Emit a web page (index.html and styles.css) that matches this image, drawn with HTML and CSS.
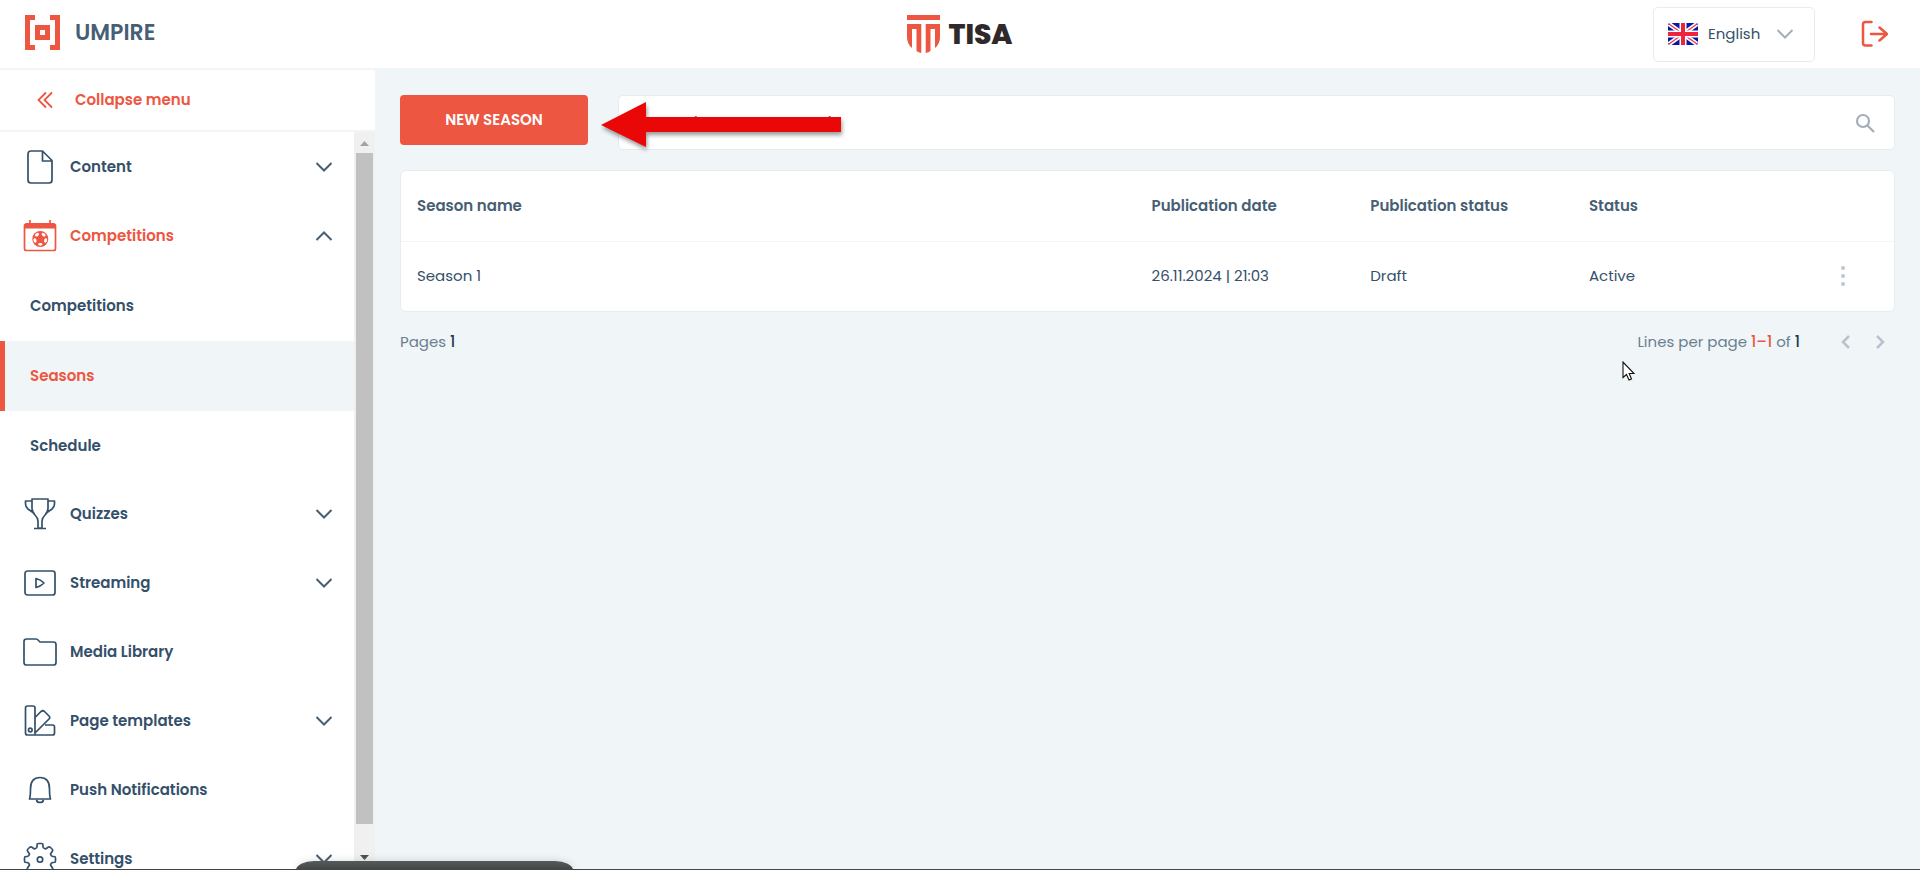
FILE: index.html
```html
<!DOCTYPE html>
<html lang="en">
<head>
  <meta charset="UTF-8">
  <title>Umpire - Seasons</title>
  <link rel="stylesheet" href="styles.css">
</head>
<body>
  <!-- Shared icons -->
  <svg class="sprite" aria-hidden="true">
    <symbol id="chevron" viewBox="0 0 18 12">
      <path d="M1.500 2 9 9.500 16.500 2" fill="none" stroke="currentColor" stroke-width="2"/>
    </symbol>
  </svg>

  <!-- Header -->
  <header class="header">
    <a class="brand" href="#">
      <svg class="brand-icon" viewBox="0 0 35 35" fill="currentColor">
        <path d="M0 0H10V5H5V30H10V35H0ZM35 0H25V5H30V30H25V35H35ZM10 10H25V25H10ZM15 15V20H20V15Z" fill-rule="evenodd"/>
      </svg>
      <span>UMPIRE</span>
    </a>
    <a class="client" href="#">
      <svg class="client-icon" viewBox="0 0 33 38" fill="currentColor">
        <path d="M0 0H33V5H0ZM0 9H14.300V38Q11.500 37.500 9.500 36V14H5V33Q0 29 0 22ZM33 9H18.700V38Q21.500 37.500 23.500 36V14H28V33Q33 29 33 22Z"/>
      </svg>
      <span>TISA</span>
    </a>
    <div class="header-right">
      <label class="language">
        <svg class="flag" viewBox="0 0 30 22">
          <rect width="30" height="22" rx="2" fill="#0b17a4"/>
          <path d="M1 1 29 21M29 1 1 21" stroke="#fff" stroke-width="4.500"/>
          <path d="M1 1 29 21M29 1 1 21" stroke="#ef3348" stroke-width="1.200"/>
          <path d="M15 0V22M0 11H30" stroke="#fff" stroke-width="7"/>
          <path d="M15 0V22M0 11H30" stroke="#ef233c" stroke-width="4"/>
        </svg>
        <select aria-label="Language">
          <option>English</option>
        </select>
        <svg class="chevron"><use href="#chevron"/></svg>
      </label>
      <button class="logout" aria-label="Log out">
        <svg viewBox="0 0 28 28" fill="none" stroke="currentColor" stroke-width="2.500" stroke-linecap="round" stroke-linejoin="round">
          <path d="M11.500 2H5.500Q3 2 3 4.500V23Q3 25.500 5.500 25.500H11.500M11 14H27M19.500 7.500 27 14 19.500 20.500"/>
        </svg>
      </button>
    </div>
  </header>

  <div class="layout">
    <!-- Sidebar -->
    <aside class="sidebar">
      <button class="collapse">
        <svg viewBox="0 0 16 18" fill="none" stroke="currentColor" stroke-width="1.800">
          <path d="M9 1.500 1.500 9 9 16.500M15 1.500 7.500 9 15 16.500"/>
        </svg>
        <span>Collapse menu</span>
      </button>
      <div class="sidebar-body">
        <nav class="menu">
          <a class="menu-item" href="#">
            <svg class="menu-icon" viewBox="0 0 34 34"><path d="M19.500 1H8Q5 1 5 4V30Q5 33 8 33H26Q29 33 29 30V10.500ZM19.500 1V11H29"/></svg>
            <span>Content</span>
            <svg class="chevron"><use href="#chevron"/></svg>
          </a>
          <a class="menu-item active" href="#">
            <svg class="menu-icon" viewBox="0 0 34 34">
              <rect x="1.500" y="5" width="31" height="26.500" rx="2"/>
              <path d="M1 8Q1 4 4 4H30Q33 4 33 8V9.500H1Z" fill="currentColor" stroke="none"/>
              <path d="M7 1V5M27 1V5"/>
              <!-- Football -->
              <circle cx="17.300" cy="20" r="8" fill="currentColor" stroke="none"/>
              <g fill="#fff" stroke="none">
                <ellipse cx="14" cy="15.700" rx="2.200" ry="1.500" transform="rotate(-35 14 15.700)"/>
                <ellipse cx="20.600" cy="15.700" rx="2.200" ry="1.500" transform="rotate(35 20.600 15.700)"/>
                <ellipse cx="12" cy="21.500" rx="1.500" ry="2.200" transform="rotate(-15 12 21.500)"/>
                <ellipse cx="22.600" cy="21.500" rx="1.500" ry="2.200" transform="rotate(15 22.600 21.500)"/>
                <ellipse cx="17.300" cy="25.300" rx="2.200" ry="1.400"/>
              </g>
            </svg>
            <span>Competitions</span>
            <svg class="chevron up"><use href="#chevron"/></svg>
          </a>
          <div class="submenu">
            <a class="submenu-item" href="#">Competitions</a>
            <a class="submenu-item current" href="#">Seasons</a>
            <a class="submenu-item" href="#">Schedule</a>
          </div>
          <a class="menu-item" href="#">
            <svg class="menu-icon" viewBox="0 0 34 34"><path d="M9 2H25V11Q25 15 22 18 19 21 19 24V31H15V24Q15 21 12 18 9 15 9 11ZM9 4H2.500V7Q2.500 10 5 12L10 15.500M25 4H31.500V7Q31.500 10 29 12L24 15.500M11 31.500H23"/></svg>
            <span>Quizzes</span>
            <svg class="chevron"><use href="#chevron"/></svg>
          </a>
          <a class="menu-item" href="#">
            <svg class="menu-icon" viewBox="0 0 34 34"><rect x="2" y="5" width="30" height="24" rx="2.500"/><path d="M13 12.500V21.500Q17.500 20.500 21 17 17.500 13.500 13 12.500Z"/></svg>
            <span>Streaming</span>
            <svg class="chevron"><use href="#chevron"/></svg>
          </a>
          <a class="menu-item" href="#">
            <svg class="menu-icon" viewBox="0 0 34 34"><path d="M3.500 4H13Q14.500 4 15.500 5.500L17 7H30.500Q33 7 33 9.500V27.500Q33 30 30.500 30H3.500Q1 30 1 27.500V6.500Q1 4 3.500 4Z"/></svg>
            <span>Media Library</span>
          </a>
          <a class="menu-item" href="#">
            <svg class="menu-icon" viewBox="0 0 34 34"><path d="M4.500 2H10Q12 2 12 4V31H4.500Q2.500 31 2.500 29V4Q2.500 2 4.500 2ZM12 13.500 18 7.500Q20 6 21.500 7.500L26 12Q27.500 13.500 26 15L12 29M22 21H29.500Q31.500 21 31.500 23V29Q31.500 31 29.500 31H11"/><circle cx="7.300" cy="26" r="1.800"/></svg>
            <span>Page templates</span>
            <svg class="chevron"><use href="#chevron"/></svg>
          </a>
          <a class="menu-item" href="#">
            <svg class="menu-icon" viewBox="0 0 34 34"><path d="M6.500 26H27.500Q26.500 23 26.500 16 26.500 4.500 17 4.500T7.500 16Q7.500 23 6.500 26ZM13.500 27Q14 29.500 17 29.500T20.500 27"/></svg>
            <span>Push Notifications</span>
          </a>
          <a class="menu-item" href="#">
            <svg class="menu-icon" viewBox="0 0 34 34">
              <path d="M14 5V3Q14 1.500 15.500 1.500H18.500Q20 1.500 20 3V5Q20.500 6.500 22.500 7L25.500 5Q26.500 4.500 27.500 5.500L29 7Q30 8 29.500 9L27.500 12Q28 14 29.500 14.500H31Q32.500 14.500 32.500 16V19Q32.500 20.500 31 20.500H29.500Q28 21 27.500 23L29.500 26Q30 27 29 28L27.500 29.500Q26.500 30.500 25.500 30L22.500 28Q20.500 28.500 20 30V32Q20 33.500 18.500 33.500H15.500Q14 33.500 14 32V30Q13.500 28.500 11.500 28L8.500 30Q7.500 30.500 6.500 29.500L5 28Q4 27 4.500 26L6.500 23Q6 21 4.500 20.500H3Q1.500 20.500 1.500 19V16Q1.500 14.500 3 14.500H4.500Q6 14 6.500 12L4.500 9Q4 8 5 7L6.500 5.500Q7.500 4.500 8.500 5L11.500 7Q13.500 6.500 14 5Z"/>
              <circle cx="17" cy="17.500" r="2.700"/>
            </svg>
            <span>Settings</span>
            <svg class="chevron"><use href="#chevron"/></svg>
          </a>
        </nav>
        <div class="scrollbar" aria-hidden="true">
          <div class="scroll-arrow"></div>
          <div class="scroll-thumb"></div>
          <div class="scroll-arrow down"></div>
        </div>
      </div>
    </aside>

    <!-- Main Content -->
    <main class="content">
      <div class="toolbar">
        <button class="new-season">NEW SEASON</button>
        <div class="search">
          <input type="text" aria-label="Search" placeholder="Search (min. 3 characters)">
          <button class="search-button" aria-label="Search">
            <svg viewBox="0 0 20 20" fill="none" stroke="currentColor" stroke-width="2.200"><circle cx="8" cy="8" r="6"/><path d="M12.500 12.500 19 19"/></svg>
          </button>
          <!-- Arrow pointing at the new season button -->
          <svg class="pointer-arrow" viewBox="0 0 241 46"><path d="M0 23 45 0V15H240V30H45V45Z" fill="#ea0707"/></svg>
        </div>
      </div>

      <div class="card">
        <table class="seasons">
          <thead>
            <tr>
              <th class="col-name">Season name</th>
              <th class="col-info">Publication date</th>
              <th class="col-info">Publication status</th>
              <th class="col-info">Status</th>
              <th></th>
            </tr>
          </thead>
          <tbody>
            <tr>
              <td>Season 1</td>
              <td>26.11.2024 | 21:03</td>
              <td>Draft</td>
              <td>Active</td>
              <td class="actions">
                <button class="more" aria-label="More actions">
                  <svg viewBox="0 0 4 20" fill="currentColor"><circle cx="2" cy="2" r="2"/><circle cx="2" cy="10" r="2"/><circle cx="2" cy="18" r="2"/></svg>
                </button>
              </td>
            </tr>
          </tbody>
        </table>
      </div>

      <div class="pagination">
        <p>Pages <b>1</b></p>
        <div class="pager">
          <p>Lines per page <b class="range">1–1</b> of <b>1</b></p>
          <button class="page-button" aria-label="Previous page"><svg viewBox="0 0 10 14"><path d="M8 1 2 7 8 13"/></svg></button>
          <button class="page-button" aria-label="Next page"><svg viewBox="0 0 10 14"><path d="M2 1 8 7 2 13"/></svg></button>
        </div>
      </div>
    </main>
  </div>

  <svg class="cursor" viewBox="0 0 13 20"><path d="M1 1V16.500L4.500 13.500 7 19 9.500 18 7.200 12.500H12Z" fill="#fff" stroke="#111" stroke-width="1.100"/></svg>
  <div class="dock"></div>
</body>
</html>
```
FILE: styles.css
```css
:root {
  --primary: #ed5640;
  --dark: #34506a;
  --text: #475f75;
  --muted: #6b7f90;
  --gray: #a3afbb;
  --light: #f0f5f8;
  --border: #e6ecf0;
}

* {
  margin: 0;
  padding: 0;
  box-sizing: border-box;
}

body {
  font-family: Poppins, Inter, sans-serif;
  font-size: 15px;
  line-height: 24px;
  color: var(--dark);
  background-color: var(--light);
  height: 100vh;
  display: flex;
  flex-direction: column;
  overflow: hidden;
  border-bottom: 1px solid #414546;
}

a {
  color: inherit;
  text-decoration: none;
}

button,
input,
select {
  font: inherit;
  color: inherit;
  border: none;
  background: none;
}

button {
  cursor: pointer;
}

svg {
  display: block;
  flex-shrink: 0;
}

.sprite {
  display: none;
}

.chevron {
  width: 18px;
  height: 12px;
}

.up {
  transform: rotate(180deg);
}

/* Header */
.header {
  display: grid;
  grid-template-columns: 1fr auto 1fr;
  align-items: center;
  height: 70px;
  flex-shrink: 0;
  padding: 0 25px;
  background-color: white;
  border-bottom: 2px solid var(--light);
}

.brand {
  display: flex;
  align-items: center;
  gap: 15px;
  padding-bottom: 3px;
  font-size: 22px;
  font-weight: 600;
  color: var(--text);
}

.brand-icon {
  width: 35px;
  height: 35px;
  color: var(--primary);
}

.client {
  display: flex;
  align-items: center;
  gap: 8px;
  font-size: 28px;
  font-weight: 800;
  color: #30292a;
}

.client span {
  padding-top: 2px;
}

.client-icon {
  width: 33px;
  height: 38px;
  color: var(--primary);
}

.header-right {
  display: flex;
  justify-content: flex-end;
  align-items: center;
  gap: 45px;
  padding-right: 7px;
}

.language {
  display: flex;
  align-items: center;
  gap: 10px;
  width: 162px;
  height: 55px;
  padding: 0 20px 0 14px;
  border: 1px solid var(--border);
  border-radius: 5px;
  color: var(--gray);
}

.language select {
  flex: 1;
  min-width: 0;
  appearance: none;
  outline: none;
  color: var(--dark);
}

.flag {
  width: 30px;
  height: 22px;
}

.logout {
  color: var(--primary);
}

.logout svg {
  width: 28px;
  height: 28px;
}

.layout {
  display: flex;
  flex: 1;
  min-height: 0;
}

/* Sidebar */
.sidebar {
  display: flex;
  flex-direction: column;
  width: 375px;
  flex-shrink: 0;
  background-color: white;
  font-weight: 600;
}

.collapse {
  display: flex;
  align-items: center;
  gap: 22px;
  height: 62px;
  flex-shrink: 0;
  padding-left: 37px;
  border-bottom: 2px solid var(--light);
  color: var(--primary);
  font-weight: 600;
}

.collapse svg {
  width: 16px;
  height: 18px;
}

.sidebar-body {
  display: flex;
  flex: 1;
  min-height: 0;
}

.menu {
  flex: 1;
  overflow: hidden;
}

.menu-item {
  display: flex;
  align-items: center;
  height: 69px;
  gap: 13px;
  padding: 0 21px 0 23px;
}

.menu-item .chevron {
  margin-left: auto;
  color: var(--text);
}

.menu-icon {
  width: 34px;
  height: 34px;
  fill: none;
  stroke: currentColor;
  stroke-width: 1.7;
  stroke-linejoin: round;
}

.active {
  color: var(--primary);
}

.submenu {
  padding-top: 1px;
  margin-bottom: -2px;
}

.submenu-item {
  display: flex;
  align-items: center;
  height: 70px;
  padding-left: 30px;
}

.current {
  padding-left: 25px;
  border-left: 5px solid var(--primary);
  background-color: var(--light);
  color: var(--primary);
}

.scrollbar {
  display: flex;
  flex-direction: column;
  width: 21px;
  padding: 0 2px;
  background-color: #f0f0f0;
}

.scroll-arrow {
  height: 21px;
  padding: 9px 4px;
}

.scroll-arrow::before {
  content: "";
  display: block;
  width: 9px;
  height: 5px;
  background-color: #a3a3a3;
  clip-path: polygon(50% 0, 100% 100%, 0 100%);
}

.scroll-arrow.down {
  padding-top: 7px;
}

.scroll-arrow.down::before {
  background-color: #505050;
  clip-path: polygon(0 0, 100% 0, 50% 100%);
}

.scroll-thumb {
  width: 17px;
  height: 91%;
  margin-bottom: auto;
  background-color: #c1c1c1;
}

/* Main Content */
.content {
  flex: 1;
  padding: 25px;
}

.toolbar {
  display: flex;
  align-items: flex-start;
  gap: 30px;
  margin-bottom: 20px;
}

.new-season {
  width: 188px;
  height: 50px;
  border-radius: 4px;
  background-color: var(--primary);
  color: white;
  font-weight: 600;
}

.search {
  position: relative;
  display: flex;
  align-items: center;
  flex: 1;
  height: 55px;
  padding: 0 19px 0 15px;
  border: 1px solid var(--border);
  border-radius: 5px;
  background-color: white;
}

.search input {
  flex: 1;
  padding-top: 2px;
  outline: none;
}

.search input::placeholder {
  color: var(--text);
}

.search-button {
  color: var(--gray);
}

.search-button svg {
  width: 20px;
  height: 20px;
}

.pointer-arrow {
  position: absolute;
  left: -18px;
  top: 6px;
  width: 241px;
  height: 46px;
  overflow: visible;
  pointer-events: none;
  filter: drop-shadow(1px 3px 2px rgba(0, 0, 0, 0.4));
}

.card {
  border: 1px solid var(--border);
  border-radius: 6px;
  background-color: white;
}

.seasons {
  width: 100%;
  table-layout: fixed;
  border-collapse: collapse;
}

.seasons th,
.seasons td {
  height: 70px;
  padding: 0 16px;
  text-align: left;
}

.seasons th {
  font-weight: 600;
  color: var(--text);
  border-bottom: 1px solid var(--light);
}

.col-name {
  width: 49.2%;
}

.col-info {
  width: 14.65%;
}

.actions {
  color: #bcc6cf;
}

.more {
  display: block;
  padding: 6px;
  margin-left: 27px;
}

.more svg {
  width: 4px;
  height: 20px;
}

.pagination {
  display: flex;
  justify-content: space-between;
  align-items: center;
  margin-top: 18px;
  color: var(--muted);
}

.pagination b {
  font-weight: 500;
  color: #243b53;
}

.pagination .range {
  color: var(--primary);
}

.pager {
  display: flex;
  align-items: center;
  gap: 24px;
  padding-right: 10px;
}

.pager p {
  margin-right: 17px;
}

.page-button svg {
  width: 10px;
  height: 14px;
  fill: none;
  stroke: #b9c3cd;
  stroke-width: 2.5;
}

/* Overlays */
.cursor {
  position: absolute;
  left: 1622px;
  top: 361px;
  width: 13px;
  height: 20px;
}

.dock {
  position: absolute;
  left: 296px;
  bottom: 0;
  width: 277px;
  height: 9px;
  border-radius: 18px 18px 0 0 / 9px 9px 0 0;
  background: linear-gradient(#555b5b, #414546);
  box-shadow: 0 0 8px rgba(0, 0, 0, 0.15);
}
```
